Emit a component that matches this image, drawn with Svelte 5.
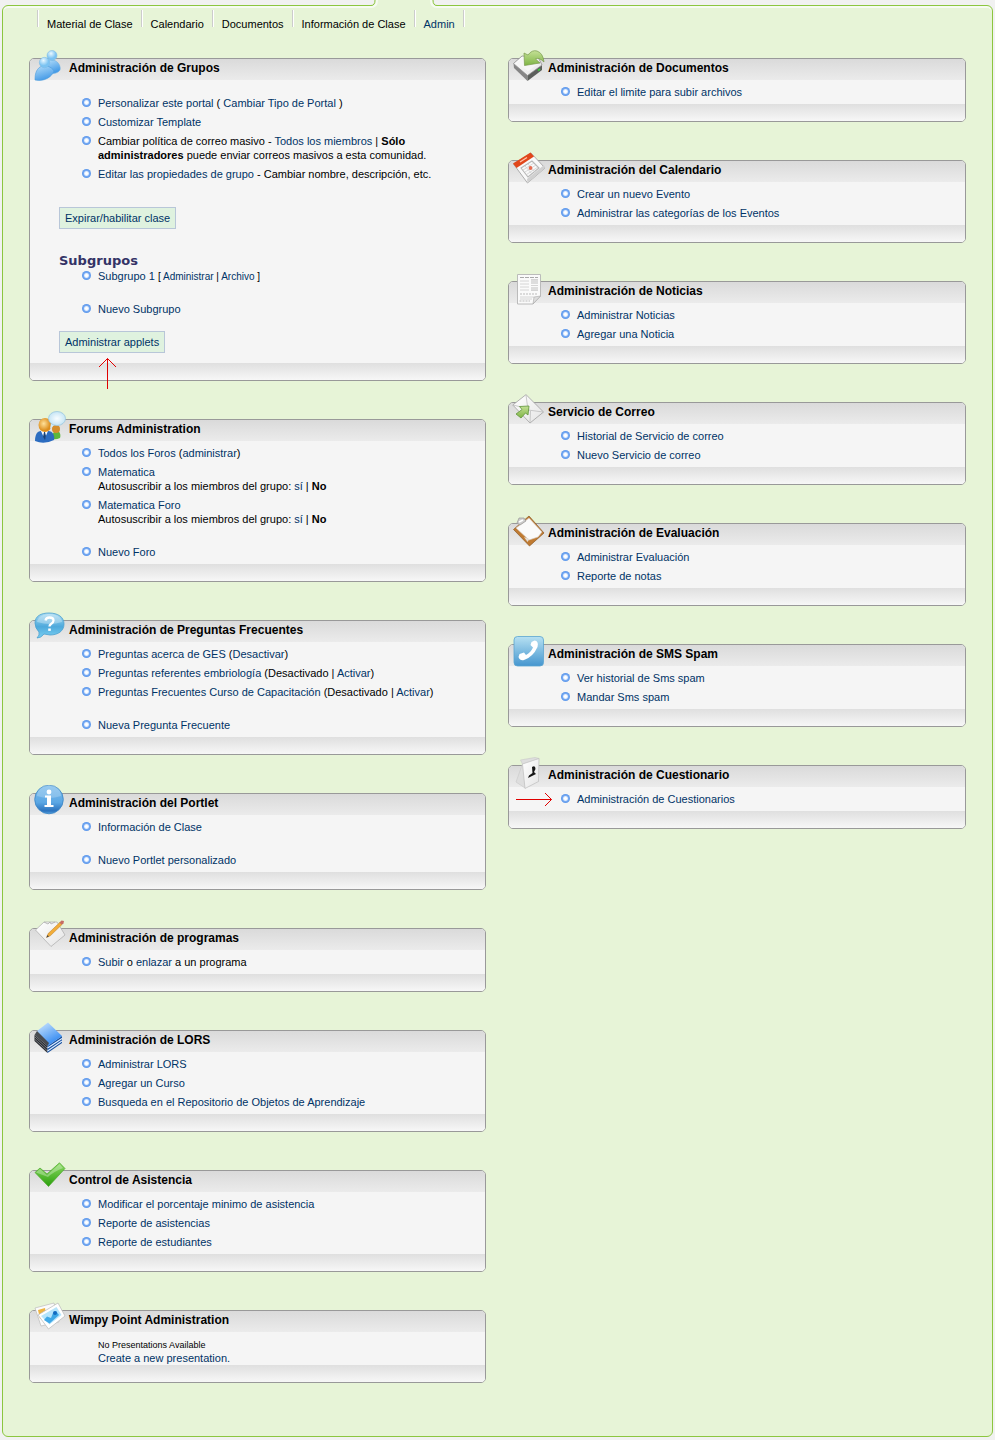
<script>
  const nav = ['Material de Clase', 'Calendario', 'Documentos', 'Información de Clase', 'Admin'];

  const a = (text) => ({ kind: 'link', text });
  const b = (text) => ({ kind: 'bold', text });
  const t = (text) => ({ kind: 'text', text });
  const br = { kind: 'break' };

  const groupItems = [
    { parts: [a('Personalizar este portal'), t(' ( '), a('Cambiar Tipo de Portal'), t(' )')] },
    { parts: [a('Customizar Template')] },
    {
      parts: [
        t('Cambiar política de correo masivo - '), a('Todos los miembros'), t(' | '),
        b('Sólo'), br, b('administradores'), t(' puede enviar correos masivos a esta comunidad.')
      ]
    },
    { parts: [a('Editar las propiedades de grupo'), t(' - Cambiar nombre, descripción, etc.')] }
  ];

  const subgroupItems = [
    {
      parts: [a('Subgrupo 1'), t(' ')],
      small: [t('[ '), a('Administrar'), t(' | '), a('Archivo'), t(' ]')]
    },
    { gap: true, parts: [a('Nuevo Subgrupo')] }
  ];

  const left = [
    {
      title: 'Forums Administration', icon: 'forum',
      items: [
        { parts: [a('Todos los Foros'), t(' ('), a('administrar'), t(')')] },
        { parts: [a('Matematica'), br, t('Autosuscribir a los miembros del grupo: '), a('sí'), t(' | '), b('No')] },
        { parts: [a('Matematica Foro'), br, t('Autosuscribir a los miembros del grupo: '), a('sí'), t(' | '), b('No')] },
        { gap: true, parts: [a('Nuevo Foro')] }
      ]
    },
    {
      title: 'Administración de Preguntas Frecuentes', icon: 'question',
      items: [
        { parts: [a('Preguntas acerca de GES'), t(' ('), a('Desactivar'), t(')')] },
        { parts: [a('Preguntas referentes embriología'), t(' (Desactivado | '), a('Activar'), t(')')] },
        { parts: [a('Preguntas Frecuentes Curso de Capacitación'), t(' (Desactivado | '), a('Activar'), t(')')] },
        { gap: true, parts: [a('Nueva Pregunta Frecuente')] }
      ]
    },
    {
      title: 'Administración del Portlet', icon: 'info',
      items: [
        { parts: [a('Información de Clase')] },
        { gap: true, parts: [a('Nuevo Portlet personalizado')] }
      ]
    },
    {
      title: 'Administración de programas', icon: 'program',
      items: [{ parts: [a('Subir'), t(' o '), a('enlazar'), t(' a un programa')] }]
    },
    {
      title: 'Administración de LORS', icon: 'books',
      items: [
        { parts: [a('Administrar LORS')] },
        { parts: [a('Agregar un Curso')] },
        { parts: [a('Busqueda en el Repositorio de Objetos de Aprendizaje')] }
      ]
    },
    {
      title: 'Control de Asistencia', icon: 'check',
      items: [
        { parts: [a('Modificar el porcentaje minimo de asistencia')] },
        { parts: [a('Reporte de asistencias')] },
        { parts: [a('Reporte de estudiantes')] }
      ]
    }
  ];

  const right = [
    { title: 'Administración de Documentos', icon: 'drive', items: [{ parts: [a('Editar el limite para subir archivos')] }] },
    {
      title: 'Administración del Calendario', icon: 'calendar',
      items: [{ parts: [a('Crear un nuevo Evento')] }, { parts: [a('Administrar las categorías de los Eventos')] }]
    },
    {
      title: 'Administración de Noticias', icon: 'news',
      items: [{ parts: [a('Administrar Noticias')] }, { parts: [a('Agregar una Noticia')] }]
    },
    {
      title: 'Servicio de Correo', icon: 'mail',
      items: [{ parts: [a('Historial de Servicio de correo')] }, { parts: [a('Nuevo Servicio de correo')] }]
    },
    {
      title: 'Administración de Evaluación', icon: 'clipboard',
      items: [{ parts: [a('Administrar Evaluación')] }, { parts: [a('Reporte de notas')] }]
    },
    {
      title: 'Administración de SMS Spam', icon: 'phone',
      items: [{ parts: [a('Ver historial de Sms spam')] }, { parts: [a('Mandar Sms spam')] }]
    },
    {
      title: 'Administración de Cuestionario', icon: 'survey', pointer: true,
      items: [{ parts: [a('Administración de Cuestionarios')] }]
    }
  ];
</script>

{#snippet run(parts)}{#each parts as p}{#if p.kind === 'link'}<a href="#top">{p.text}</a>{:else if p.kind === 'bold'}<b>{p.text}</b>{:else if p.kind === 'break'}<br />{:else}{p.text}{/if}{/each}{/snippet}

{#snippet list(items)}
  <ul>
    {#each items as item}
      <li class:gap={item.gap}>{@render run(item.parts)}{#if item.small}<small>{@render run(item.small)}</small>{/if}</li>
    {/each}
  </ul>
{/snippet}

{#snippet icon(name)}
  <svg class="icon" viewBox="0 0 34 34" aria-hidden="true">
    {#if name === 'users'}
      <path d="M13 13C14 10 17 9.500 20 10C25 11 28 16 27 20C25 23 21 24 17 23Z" fill="url(#blueBody)" stroke="#69afe2" stroke-width=".6" />
      <circle cx="19" cy="5.500" r="5" fill="url(#blueBall)" stroke="#7cb9e3" stroke-width=".5" />
      <path d="M2 30C2 24 3 20 7 17C12 14 19 17 21 21C19 27 11 32 2 30Z" fill="url(#blueBody)" stroke="#4a9bdc" stroke-width=".6" />
      <circle cx="11.500" cy="12.500" r="5.200" fill="url(#blueBall)" stroke="#7cb9e3" stroke-width=".5" />
    {:else if name === 'forum'}
      <path d="M19 28C19 22 21 20 24 20C27 20 28 24 27 27Q23 29 19 28Z" fill="#5cb83d" />
      <circle cx="23" cy="18" r="4" fill="#d58e2d" />
      <path d="M2 30C2 24 4 20 8 20H15C20 20 22 25 21 29Q11 34 2 30Z" fill="#2c6cc0" />
      <path d="M8 20L11.500 28L15 20Z" fill="#fff" /><path d="M11 21L10 26L12 29L13 25L12 21Z" fill="#16427c" />
      <ellipse cx="12" cy="14" rx="6.500" ry="7" fill="url(#gold)" />
      <path d="M18 12L17 18L22 13Z" fill="#d4ebf7" />
      <ellipse cx="24" cy="7.500" rx="8.500" ry="7" fill="url(#paleBall)" stroke="#9bc8df" stroke-width=".8" />
    {:else if name === 'question'}
      <path d="M2 11C2 4 8 1 16 1C25 1 31 5 31 12C31 19 25 23 17 23L11 22Q8 26 4 26Q7 23 6 20Q2 16 2 11Z" fill="url(#bubble)" stroke="#4aa0cf" stroke-width=".8" />
      <path d="M4 10C5 4 11 2 17 2C24 2 29 6 29 10Q17 14 4 10Z" fill="#fff" opacity=".3" />
      <path d="M12.500 8.500Q13 5.500 16.500 5.500Q20.500 5.500 20.500 8.500Q20.500 10.500 18 12Q16.500 13 16.500 14.500" fill="none" stroke="#fff" stroke-width="2.300" />
      <rect x="15.200" y="16.500" width="2.600" height="2.400" fill="#fff" />
    {:else if name === 'info'}
      <circle cx="16" cy="14.500" r="14.300" fill="url(#infoBall)" stroke="#3984c4" stroke-width=".8" />
      <path d="M4 11A12 11 0 0 1 28 11Q16 15 4 11Z" fill="#fff" opacity=".22" />
      <circle cx="16" cy="7" r="2.400" fill="#fff" />
      <path d="M12 10.500H18V20H20.500V22H11.500V20H14V12.500H12Z" fill="#fff" />
    {:else if name === 'program'}
      <path d="M2.500 10L11 2H24L32 15L18 26.500Z" fill="url(#paper)" stroke="#aaa" stroke-width=".7" />
      <path d="M11 2L15 4L17 2L18 4L22 2" fill="none" stroke="#aaa" stroke-width=".8" />
      <path d="M13.500 17.500L15.200 13.500L27 2.300L29 4.500L17.300 15.800Z" fill="#f2ad39" stroke="#b47824" stroke-width=".5" />
      <path d="M26.500 2.500L28.500 .500L31 1L30.500 3.200L28.800 4.700Z" fill="#c76c64" />
      <path d="M13.500 17.500L14.500 15L16 16.500Z" fill="#444" />
    {:else if name === 'books'}
      <path d="M1.500 13L14.500 24V31L1.500 19Z" fill="#2b2d32" />
      <path d="M14.500 24L29 14V21L14.500 31Z" fill="#174f9f" />
      <path d="M14.500 26L29 16.500M14.500 29L29 19" stroke="#e0efff" stroke-width="1.100" />
      <path d="M2 15L14 26M2 17.500L14 28.500" stroke="#898d93" stroke-width=".8" />
      <path d="M4 9L15 .500L29 14L14.500 24Z" fill="url(#bookCover)" />
      <path d="M1.500 13L4 9L16 21L14.500 24Z" fill="#484b51" />
    {:else if name === 'check'}
      <path d="M2 10.500L7 6L14 12L26.500 .800L32 6.500L15.500 24.500Z" fill="url(#greenCheck)" stroke="#4ca72d" stroke-width=".7" />
      <path d="M3 10.500L7 7L14 13L26.500 2L30 6Q20 10 15 15Z" fill="#fff" opacity=".3" />
    {:else if name === 'slides'}
      <path d="M2 6L21 1L26 20L8 24Z" fill="#fbfbfb" stroke="#bbb" stroke-width=".7" />
      <path d="M5 8L12 6L13 12L7 17Z" fill="#efb441" />
      <path d="M5 13L25 1L32 14L15.500 27Z" fill="#fff" stroke="#b7b7b7" stroke-width=".7" />
      <path d="M8 14L23.500 5L28.500 13L16.500 22.500Z" fill="#b6e4fb" />
      <path d="M11 18L14 14.500L18 16L20 11L23 9L26 13L16.500 21.500Z" fill="#3fa8e6" /><circle cx="22" cy="11" r="2" fill="#126ac0" />
    {:else if name === 'drive'}
      <path d="M1.500 13.500L15.500 25V31L2 18Z" fill="#858585" />
      <path d="M15.500 25L30 15V20L15.500 31Z" fill="#5b5e5b" />
      <path d="M1.500 13.500L10 6L26 7L30 15L15.500 25.500Z" fill="url(#paper)" stroke="#8b8b8b" stroke-width=".8" />
      <path d="M5 13L11 8L23 9L26 14L16 21Z" fill="#f6f6f6" />
      <path d="M26 20.500L28 19" stroke="#39c939" stroke-width="1.800" />
      <path d="M12 3L16 5Q20 -.500 25 1Q31 3 32 12Q27 7 23.500 9L28 13L12.500 15.500Z" fill="url(#arrowGreen)" stroke="#78994c" stroke-width=".7" />
    {:else if name === 'calendar'}
      <path d="M1.500 12L19 1L33 16L15.500 31Z" fill="#f9f9f9" stroke="#9b9b9b" stroke-width=".8" />
      <path d="M15.500 31L33 16L32 13L15 27Z" fill="#d0d0d0" />
      <path d="M1 11.500L18.500 .500L22 4.500L4.500 16Z" fill="#e1461b" />
      <path d="M8 10L15 5.500" stroke="#ffc2aa" stroke-width="1.400" />
      <path d="M9 16L20 9L27 16L16 25Z" fill="none" stroke="#b7b7b7" stroke-width="1.100" />
      <path d="M11 18L22 11M13 20L24 13M14.500 22.500L26 15M13 14L20 22M16 12L23 20" stroke="#c9c9c9" stroke-width=".7" />
      <circle cx="18.500" cy="16" r="1.900" fill="#e86b51" />
    {:else if name === 'news'}
      <path d="M5.500 1.500H28.500V23L21 31H5.500Z" fill="#fafafa" stroke="#b4b4b4" stroke-width=".9" />
      <path d="M8 4.500H26" stroke="#aaa" stroke-width="1" stroke-dasharray="4 1" />
      <path d="M8 8H17M8 11H17M8 14H17M8 17H17M19 6.500H26M19 12.500H26M19 17.500H26M8 24H22M8 26H20" stroke="#ccc" stroke-width=".8" />
      <path d="M19 7H26V11H19ZM19 14H26V17H19Z" fill="#ddd" />
      <path d="M8 21H26M7.500 28H18" stroke="#bbb" stroke-width="1" stroke-dasharray="2 1" />
      <path d="M21 31L22 24L28.500 23Z" fill="#ddd" stroke="#aaa" stroke-width=".6" />
    {:else if name === 'mail'}
      <path d="M.800 11L14 .600L31.500 18L18 29Z" fill="url(#paper)" stroke="#9f9f9f" stroke-width=".8" />
      <path d="M14 1L16 16L31 18M1 11L13 14M18 28.500L18.500 17" fill="none" stroke="#bdbdbd" stroke-width=".8" />
      <path d="M17 12L7.500 12.500L10 15.500L4 20L9 24L13.500 19L16 21Z" fill="url(#arrowGreen)" stroke="#5f943b" stroke-width=".8" />
    {:else if name === 'clipboard'}
      <path d="M1.500 14.500L17 1L32 18L17.500 31Z" fill="#c07b32" stroke="#8b5823" stroke-width=".7" />
      <path d="M4 13L17 3L30 17L26 22L17 25Z" fill="#fafafa" stroke="#d1c6bb" stroke-width=".6" />
      <path d="M12 22L17.500 24L15.500 27Z" fill="#e3ddd6" />
      <path d="M5 8L7 3L12 3L14 6L8 10Z" fill="#ccc" stroke="#979797" stroke-width=".7" />
      <path d="M7 7L11 5" stroke="#fff" stroke-width="1.400" />
    {:else if name === 'phone'}
      <rect x="2" y=".500" width="29.500" height="29.500" rx="3.500" fill="url(#phoneTile)" stroke="#5ba4d0" stroke-width=".8" />
      <path d="M19.500 6L22.500 4.500Q27 5 25.500 11Q21 21 12 24Q8 25 6.500 21L7.500 18L12 16.500L14 19Q19 16 21 11.500L18.500 9Z" fill="#fff" />
    {:else if name === 'survey'}
      <path d="M10.500 7L8.500 3L23 .500L27 1.500L13 31L4 25Z" fill="#dedede" stroke="#c8c8c8" stroke-width=".6" />
      <path d="M10.500 7L27 1.500L26.500 24.500L13 31.500Z" fill="url(#paper)" stroke="#bdbdbd" stroke-width=".7" />
      <path d="M20 10Q23.500 8 23.500 12L22 15L24 17L16 21L17 18.500L20.500 16Z" fill="#151515" />
    {/if}
  </svg>
{/snippet}

{#snippet heading(title, name)}
  <header class="head">{@render icon(name)}<h2>{title}</h2></header>
{/snippet}

<svg class="defs" aria-hidden="true">
  <defs>
    <radialGradient id="blueBall" cx=".4" cy=".3"><stop offset="0" stop-color="#eaf8ff" /><stop offset="1" stop-color="#7bc3f2" /></radialGradient>
    <linearGradient id="blueBody" x1="0" y1="0" x2=".4" y2="1"><stop offset="0" stop-color="#b5defa" /><stop offset="1" stop-color="#459be7" /></linearGradient>
    <radialGradient id="gold" cx=".4" cy=".4"><stop offset="0" stop-color="#ffe19a" /><stop offset="1" stop-color="#dc8e1d" /></radialGradient>
    <radialGradient id="paleBall"><stop offset="0" stop-color="#f8fdff" /><stop offset="1" stop-color="#c6e5f5" /></radialGradient>
    <linearGradient id="bubble" x2="0" y2="1"><stop offset="0" stop-color="#a7daf2" /><stop offset=".55" stop-color="#4ea9dc" /><stop offset="1" stop-color="#7bd1f2" /></linearGradient>
    <linearGradient id="infoBall" x2="0" y2="1"><stop offset="0" stop-color="#7dbdec" /><stop offset=".6" stop-color="#5ba7e4" /><stop offset=".9" stop-color="#2b72bd" /><stop offset="1" stop-color="#57a4e3" /></linearGradient>
    <linearGradient id="paper" x2="1" y2="1"><stop offset="0" stop-color="#fff" /><stop offset="1" stop-color="#e4e4e4" /></linearGradient>
    <linearGradient id="bookCover" x2=".6" y2="1"><stop offset="0" stop-color="#d3e9ff" /><stop offset="1" stop-color="#2c86f1" /></linearGradient>
    <linearGradient id="greenCheck" x2="0" y2="1"><stop offset="0" stop-color="#8cdc62" /><stop offset="1" stop-color="#2a9e0c" /></linearGradient>
    <linearGradient id="arrowGreen" x2="0" y2="1"><stop offset="0" stop-color="#c4e096" /><stop offset="1" stop-color="#7fb545" /></linearGradient>
    <linearGradient id="phoneTile" x2="0" y2="1"><stop offset="0" stop-color="#b7e1f2" /><stop offset="1" stop-color="#4596cf" /></linearGradient>
  </defs>
</svg>

<div class="page" id="top">
  <svg class="notch" width="66" height="10" viewBox="0 0 66 10" aria-hidden="true">
    <path d="M0 8V5.500Q4.500 5.500 4.500 0H61.500Q61.500 5.500 66 5.500V8Q56 9 56 10H10Q10 8 0 8Z" fill="#e7f4d7" />
    <path d="M0 7Q6 7 6 0M66 7Q60 7 60 0" fill="none" stroke="#f6fbf1" stroke-width="2" />
    <path d="M0 5.500Q4 5.500 4 0M66 5.500Q62 5.500 62 0" fill="none" stroke="#8cc63f" />
  </svg>

  <div class="shell">
    <nav>
      {#each nav as label, i}
        <a href="#top" class:current={i === nav.length - 1}>{label}</a>
      {/each}
    </nav>

    <main>
      <div class="column">
        <section class="panel">
          {@render heading('Administración de Grupos', 'users')}
          <div class="body group">
            {@render list(groupItems)}
            <button type="button" class="toggle">Expirar/habilitar clase</button>
            <h3>Subgrupos</h3>
            {@render list(subgroupItems)}
            <button type="button" class="applets">Administrar applets
              <svg class="arrow-up" width="17" height="32" viewBox="0 0 17 32" aria-hidden="true"><path d="M8.500 31V.500M0 9L8.500 .500L17 9" /></svg>
            </button>
          </div>
          <div class="foot"></div>
        </section>

        {#each left as p}
          <section class="panel">
            {@render heading(p.title, p.icon)}
            <div class="body">{@render list(p.items)}</div>
            <div class="foot"></div>
          </section>
        {/each}

        <section class="panel">
          {@render heading('Wimpy Point Administration', 'slides')}
          <div class="body">
            <p><small>No Presentations Available</small></p>
            <p><a href="#top">Create a new presentation.</a></p>
          </div>
          <div class="foot"></div>
        </section>
      </div>

      <div class="column">
        {#each right as p}
          <section class="panel">
            {@render heading(p.title, p.icon)}
            <div class="body">
              {@render list(p.items)}
              {#if p.pointer}
                <svg class="arrow-right" width="36" height="13" viewBox="0 0 36 13" aria-hidden="true"><path d="M0 6.500H35.500M29 0L35.500 6.500L29 13" /></svg>
              {/if}
            </div>
            <div class="foot"></div>
          </section>
        {/each}
      </div>
    </main>
  </div>
</div>

<style>
  :global(body) {
    background: #f1f1f1;
  }

  .defs {
    position: absolute;
    width: 0;
    height: 0;
  }

  .page {
    position: relative;
    padding: 5px 2px 2px;
    color: #000;
    font: 11px/14px 'Liberation Sans', Arial, sans-serif;
  }

  .notch {
    position: absolute;
    top: 0;
    left: 371px;
  }

  .shell {
    padding: 4px 26px 53px;
    border: 1px solid #8cc63f;
    border-radius: 6px;
    background: #e7f4d7;
    box-shadow: inset 0 2px #f6fbf1;
  }

  nav {
    display: flex;
    padding-left: 8px;
    height: 48px;
    align-items: flex-start;
  }

  nav a {
    height: 17px;
    padding: 0 8px 0 9px;
    border-left: 1px solid #ccc;
    box-shadow: inset 1px 0 #fff;
    line-height: 28px;
    color: #000;
  }

  nav a.current {
    border-right: 1px solid #ccc;
    box-shadow: inset 1px 0 #fff, 1px 0 #fff;
    color: #036;
  }

  a {
    color: #036;
    text-decoration: none;
  }

  main {
    display: grid;
    grid-template-columns: 457fr 458fr;
    align-items: start;
    gap: 22px;
  }

  .column {
    display: grid;
    gap: 38px;
  }

  .panel {
    position: relative;
    border: 1px solid #999;
    border-radius: 5px;
    background: #f5f5f5;
  }

  .head {
    height: 21px;
    padding-left: 39px;
    border-radius: 4px 4px 0 0;
    background: linear-gradient(#dadada, #ebebeb);
  }

  h2 {
    margin: 0;
    font-size: 12px;
    line-height: 19px;
  }

  .icon {
    position: absolute;
    top: -9px;
    left: 3px;
    width: 34px;
    height: 34px;
  }

  .body {
    position: relative;
    padding: 5px 20px 0 52px;
  }

  ul {
    margin: 0;
    padding: 0;
    list-style: none;
  }

  li {
    position: relative;
    padding: 0 0 5px 16px;
  }

  li::before {
    content: '';
    position: absolute;
    left: 0;
    top: 2px;
    width: 9px;
    height: 9px;
    border-radius: 50%;
    background: radial-gradient(circle, #fff 0 1px, #dceafd 2px, #74a8f2 3px, #4f8fe8 5px);
  }

  li.gap {
    margin-top: 14px;
  }

  small {
    font-size: 9px;
    line-height: 1;
    white-space: pre;
  }

  li small {
    font-size: 10px;
  }

  p {
    margin: 0;
    padding-left: 16px;
  }

  h3 {
    margin: 24px 0 0 -23px;
    color: #336;
    font: bold 13px/16px 'DejaVu Sans', Verdana, sans-serif;
  }

  .group {
    padding-top: 16px;
    padding-bottom: 10px;
  }

  button {
    position: relative;
    display: block;
    height: 22px;
    margin: 10px 0 0 -23px;
    padding: 0 5px;
    border: 1px solid #b8c6d8;
    background: #dff2df;
    color: #036;
    font: inherit;
  }

  .toggle {
    margin-top: 21px;
  }

  .arrow-up,
  .arrow-right {
    position: absolute;
    z-index: 1;
    fill: none;
    stroke: #e00000;
  }

  .arrow-up {
    top: 26px;
    left: 39px;
  }

  .arrow-right {
    top: 6px;
    left: 7px;
  }

  .foot {
    height: 17px;
    border-radius: 0 0 4px 4px;
    background: linear-gradient(#dfdfdf, #f7f7f7);
  }
</style>
